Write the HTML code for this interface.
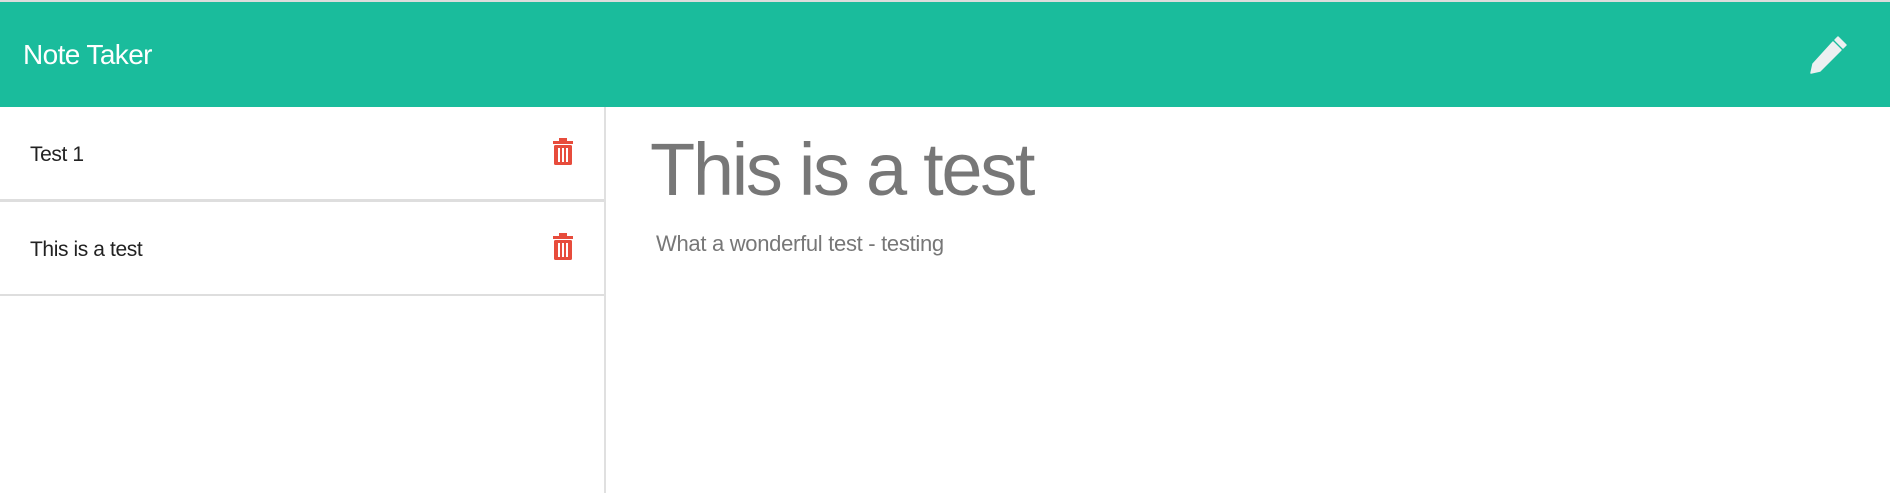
<!DOCTYPE html>
<html><head><style>
*{margin:0;padding:0;box-sizing:border-box}
body{width:1890px;height:493px;background:#fff;font-family:"Liberation Sans",sans-serif;overflow:hidden;position:relative}
.top{position:absolute;left:0;top:0;width:1890px;height:2px;background:#dcdcdc}
.nav{position:absolute;left:0;top:2px;width:1890px;height:105px;background:#1abc9c}
.brand{position:absolute;left:23px;top:37px;color:#fff;font-size:28px;letter-spacing:-0.6px}
.side{position:absolute;left:0;top:107px;width:606px;height:386px;border-right:2px solid #e0e0e0}
.item{position:absolute;left:0;width:604px;height:92px;background:#fff}
.item span{position:absolute;left:30px;top:36px;font-size:21px;color:#222;letter-spacing:-0.4px}
.item svg{position:absolute;left:552px;top:31px}
.sep{position:absolute;left:0;width:604px;height:3px;background:#dedede}
h1{position:absolute;left:650px;top:127px;font-weight:normal;font-size:74px;color:#777;letter-spacing:-2.3px}
p{position:absolute;left:656px;top:231px;font-size:22px;color:#777;letter-spacing:-0.3px}
</style></head><body>
<div class="top"></div>
<div class="nav"><div class="brand">Note Taker</div>
<svg style="position:absolute;left:1808px;top:32px" width="42" height="42" viewBox="0 0 42 42"><path d="M30 3 L38 11 L35 14 L27 6 Z M25 8 L33 16 L12 37 L3 39 L5 30 Z" fill="#ecf0f1" stroke="#ecf0f1" stroke-width="1.5" stroke-linejoin="round"/></svg>
</div>
<div class="side">
<div class="item" style="top:0"><span>Test 1</span>
<svg width="22" height="28" viewBox="0 0 20 28"><rect x="0" y="3" width="20" height="3" fill="#e74c3c"/><rect x="6" y="0" width="8" height="4" fill="#e74c3c"/><rect x="1" y="7" width="18" height="20" rx="1.5" fill="#e74c3c"/><rect x="5" y="10" width="2" height="14" fill="#fff"/><rect x="9" y="10" width="2" height="14" fill="#fff"/><rect x="13" y="10" width="2" height="14" fill="#fff"/></svg></div>
<div class="sep" style="top:92px"></div>
<div class="item" style="top:95px"><span>This is a test</span>
<svg width="22" height="28" viewBox="0 0 20 28"><rect x="0" y="3" width="20" height="3" fill="#e74c3c"/><rect x="6" y="0" width="8" height="4" fill="#e74c3c"/><rect x="1" y="7" width="18" height="20" rx="1.5" fill="#e74c3c"/><rect x="5" y="10" width="2" height="14" fill="#fff"/><rect x="9" y="10" width="2" height="14" fill="#fff"/><rect x="13" y="10" width="2" height="14" fill="#fff"/></svg></div>
<div class="sep" style="top:187px;height:2px"></div>
</div>
<h1>This is a test</h1>
<p>What a wonderful test - testing</p>
</body></html>
